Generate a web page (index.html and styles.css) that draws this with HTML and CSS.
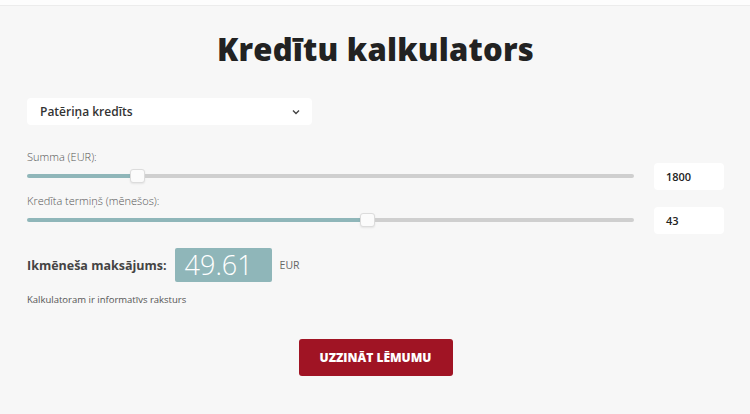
FILE: index.html
```html
<!DOCTYPE html>
<html lang="lv">
<head>
<meta charset="utf-8">
<link rel="stylesheet" href="styles.css">
</head>
<body>
<div class="topbar"></div>
<main class="calc">
  <h1 class="title">Kredītu kalkulators</h1>
  <div class="select">
    <span>Patēriņa kredīts</span>
    <svg class="chev" width="8" height="6" viewBox="0 0 8 6"><path d="M1 1.5 L4 4.5 L7 1.5" fill="none" stroke="#444" stroke-width="1.4"/></svg>
  </div>
  <div class="rows">
    <div class="row">
      <div class="field">
        <div class="label">Summa (EUR):</div>
        <div class="slider"><div class="fill" style="width:17%"></div><div class="thumb"></div><div class="rest"></div></div>
      </div>
      <div class="num">1800</div>
    </div>
    <div class="row">
      <div class="field">
        <div class="label">Kredīta termiņš (mēnešos):</div>
        <div class="slider"><div class="fill" style="width:54.9%"></div><div class="thumb"></div><div class="rest"></div></div>
      </div>
      <div class="num">43</div>
    </div>
  </div>
  <div class="result">
    <span class="rlabel">Ikmēneša maksājums:</span>
    <span class="rbox">49.61</span>
    <span class="cur">EUR</span>
  </div>
  <p class="note">Kalkulatoram ir informatīvs raksturs</p>
  <div class="actions"><button class="btn">UZZINĀT LĒMUMU</button></div>
</main>
</body>
</html>
```
FILE: styles.css
```css
html, body { margin: 0; padding: 0; }
body {
  background: #f7f7f7;
  font-family: "Open Sans", "Noto Sans", sans-serif;
  color: #333;
  width: 750px;
  height: 414px;
  overflow: hidden;
}
.topbar {
  height: 5px;
  background: #fdfdfd;
  border-bottom: 1px solid #ececec;
}
.calc {
  padding: 0 26px 0 27px;
}
.title {
  margin: 23px 0 0;
  text-align: center;
  font-size: 31px;
  font-weight: 800;
  line-height: 40px;
  color: #222;
  letter-spacing: 0.2px;
}
.select {
  margin-top: 29px;
  width: 285px;
  height: 27px;
  box-sizing: border-box;
  background: #fff;
  border-radius: 4px;
  display: flex;
  align-items: center;
  justify-content: space-between;
  padding: 0 12px 0 13px;
  font-size: 12px;
  font-weight: 600;
  color: #333;
}
.chev { margin-top: 1px; }
.rows {
  margin-top: 25px;
  display: flex;
  flex-direction: column;
  gap: 9px;
}
.row {
  display: flex;
  align-items: flex-end;
  gap: 20px;
}
.field { flex: 1; }
.label {
  font-size: 11px;
  font-weight: 300;
  color: #555;
  line-height: 14px;
}
.slider {
  display: flex;
  align-items: center;
  height: 18px;
  margin-top: 3px;
}
.fill {
  height: 4px;
  background: #8fb6b9;
  border-radius: 2px 0 0 2px;
}
.rest {
  flex: 1;
  height: 4px;
  background: #cfcfcf;
  border-radius: 0 2px 2px 0;
}
.thumb {
  width: 15px;
  height: 14px;
  box-sizing: border-box;
  background: #fbfbfb;
  border: 1px solid #dcdcdc;
  border-radius: 3px;
  box-shadow: 0 1px 2px rgba(0,0,0,0.08);
  flex: none;
}
.num {
  width: 70px;
  height: 27px;
  box-sizing: border-box;
  background: #fff;
  border-radius: 4px;
  padding-left: 12px;
  font-size: 11px;
  font-weight: 600;
  line-height: 27px;
  color: #222;
  margin-bottom: -5px;
}
.result {
  margin-top: 19px;
  display: flex;
  align-items: center;
  height: 34px;
}
.rlabel {
  font-size: 12.5px;
  font-weight: 700;
  color: #444;
}
.rbox {
  margin-left: 8px;
  width: 97px;
  height: 34px;
  box-sizing: border-box;
  background: #8fb6b9;
  border-radius: 2px;
  color: #fff;
  font-size: 27px;
  font-weight: 300;
  line-height: 34px;
  padding-left: 10px;
}
.cur {
  margin-left: 8px;
  font-size: 10.5px;
  color: #666;
}
.note {
  margin: 11px 0 0;
  font-size: 9.5px;
  color: #555;
}
.actions {
  display: flex;
  justify-content: center;
  margin-top: 33px;
}
.btn {
  width: 154px;
  height: 37px;
  background: #a01424;
  color: #fff;
  border: none;
  border-radius: 3px;
  font-family: "Open Sans", sans-serif;
  font-size: 12px;
  font-weight: 800;
}
```
